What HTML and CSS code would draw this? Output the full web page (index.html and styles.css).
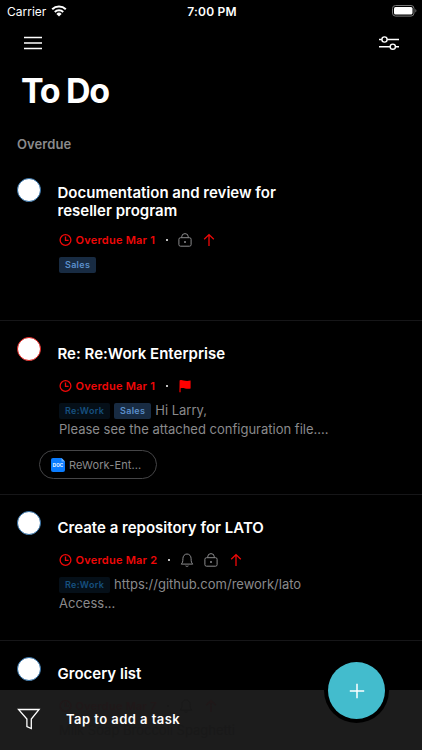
FILE: index.html
```html
<!DOCTYPE html>
<html lang="en">
<head>
<meta charset="utf-8">
<meta name="viewport" content="width=device-width, initial-scale=1">
<title>To Do</title>
<link rel="stylesheet" href="styles.css">
</head>
<body>
<!-- shared icons -->
<svg class="sprite">
	<symbol id="clock" viewBox="0 0 14 14"><circle cx="6.5" cy="7" r="5.4"/><path d="M6.5 3.6V7.3H9.6"/></symbol>
	<symbol id="lock" viewBox="0 0 14 14"><rect x=".9" y="4.700" width="12.200" height="8.500" rx="1.600"/><path d="M3.700 4.500V3.900a3.300 3.300 0 0 1 6.600 0v.6"/><circle class="dot" cx="7" cy="8.900" r="1"/></symbol>
	<symbol id="arrow" viewBox="0 0 12 14"><path d="M6 13V1.8M1.2 6.3 6 1.6l4.8 4.7"/></symbol>
	<symbol id="bell" viewBox="0 0 14 14"><path d="M1.2 11.100c1.300-1.200 1.700-2.300 1.700-5.400C2.900 3 4.600 1 7 1s4.100 2 4.100 4.700c0 3.100.4 4.200 1.700 5.400zM5.600 12.900c.8.600 2 .600 2.800 0"/></symbol>
	<symbol id="flag" viewBox="0 0 14 14"><path d="M1.600 1.400C4.300-.1 6 2.900 12.600 1.500V9.400C8.500 10.600 6 8.300 2.600 9.200V13.200H1.400z"/></symbol>
</svg>
<div class="statusbar">
	<div class="carrier">Carrier
		<svg width="16" height="12" viewBox="0 0 16 12"><path class="wave" d="M1.200 4.300a9.700 9.700 0 0 1 13.600 0M3.800 7a6 6 0 0 1 8.400 0"/><path class="tip" d="M8 11.500 5.400 8.900a3.700 3.700 0 0 1 5.200 0z"/></svg>
	</div>
	<div class="time">7:00 PM</div>
	<svg class="battery" width="25" height="12" viewBox="0 0 25 12"><rect class="shell" x=".5" y=".5" width="21.500" height="10.600" rx="3"/><rect class="level" x="2" y="2" width="18.500" height="7.600" rx="1.500"/><path class="nub" d="M23.400 4v3.600c1.300-.6 1.300-3 0-3.600"/></svg>
</div>
<div class="navbar">
	<svg width="20" height="14" viewBox="0 0 20 14"><path d="M1 1.500h18M1 7h18M1 12.500h18"/></svg>
	<svg width="22" height="16" viewBox="0 0 22 16"><path d="M1 4.500h2.800M9.200 4.500H21M1 11.700h11M17.600 11.700H21"/><circle cx="6.500" cy="4.500" r="2.600"/><circle cx="14.800" cy="11.700" r="2.600"/></svg>
</div>
<h1>To Do</h1>
<h2>Overdue</h2>
<div class="tasks">
	<div class="task first">
		<div class="check"></div>
		<div class="body">
			<div class="title">Documentation and review for reseller program</div>
			<div class="meta">
				<svg class="icon clock"><use href="#clock"/></svg><span class="due">Overdue Mar 1</span><span class="sep"></span>
				<svg class="icon"><use href="#lock"/></svg>
				<svg class="icon arrow"><use href="#arrow"/></svg>
			</div>
			<div class="desc"><span class="tag sales">Sales</span></div>
		</div>
	</div>
	<div class="task second">
		<div class="check urgent"></div>
		<div class="body">
			<div class="title">Re: Re:Work Enterprise</div>
			<div class="meta">
				<svg class="icon clock"><use href="#clock"/></svg><span class="due">Overdue Mar 1</span><span class="sep"></span>
				<svg class="icon flag"><use href="#flag"/></svg>
			</div>
			<div class="desc"><span class="tag rework">Re:Work</span><span class="tag sales">Sales</span>Hi Larry,<br>Please see the attached configuration file....</div>
			<div class="file">
				<svg width="14" height="14" viewBox="0 0 14 14"><path d="M2 0h8.500L14 3.500V12a2 2 0 0 1-2 2H2a2 2 0 0 1-2-2V2a2 2 0 0 1 2-2z"/><path class="fold" d="M10.500 0 14 3.500h-3.500z"/><text x="7" y="9.200">DOC</text></svg>
				<span>ReWork-Ent...</span>
			</div>
		</div>
	</div>
	<div class="task third">
		<div class="check"></div>
		<div class="body">
			<div class="title">Create a repository for LATO</div>
			<div class="meta">
				<svg class="icon clock"><use href="#clock"/></svg><span class="due">Overdue Mar 2</span><span class="sep"></span>
				<svg class="icon"><use href="#bell"/></svg>
				<svg class="icon"><use href="#lock"/></svg>
				<svg class="icon arrow"><use href="#arrow"/></svg>
			</div>
			<div class="desc"><span class="tag rework">Re:Work</span>https://github.com/rework/lato<br>Access...</div>
		</div>
	</div>
	<div class="task last">
		<div class="check"></div>
		<div class="body">
			<div class="title">Grocery list</div>
			<div class="meta">
				<svg class="icon clock"><use href="#clock"/></svg><span class="due">Overdue Mar 7</span><span class="sep"></span>
				<svg class="icon"><use href="#bell"/></svg>
				<svg class="icon arrow"><use href="#arrow"/></svg>
			</div>
			<div class="desc">Milk Soap Broccoli Spaghetti</div>
		</div>
	</div>
</div>
<div class="addbar">
	<svg width="24" height="22" viewBox="0 0 24 22"><path d="M1.500 1.500h20.600L14.300 11v9.500l-4.400-2V11z"/></svg>
	<span>Tap to add a task</span>
</div>
<div class="fab">
	<svg width="16" height="16" viewBox="0 0 16 16"><path d="M8 .8v14.400M.8 8h14.400"/></svg>
</div>
</body>
</html>
```
FILE: styles.css
```css
html,body{
	margin:0;
	padding:0;
	height:750px;
	overflow:hidden;
	background:#000;
	color:#fff;
	font-family:Inter,"Liberation Sans",sans-serif;
}
body{
	position:relative;
}
svg{
	display:block;
	fill:none;
	stroke:currentColor;
	flex:none;
}
.sprite{
	position:absolute;
	width:0;
	height:0;
}
.statusbar{
	display:grid;
	grid-template-columns:1fr auto 1fr;
	align-items:center;
	height:22px;
	padding:0 5px 0 7px;
	font-size:12px;
}
.carrier{
	display:flex;
	align-items:center;
	gap:5px;
	letter-spacing:0;
}
.wave{
	stroke-width:2;
}
.tip,.level{
	fill:#fff;
	stroke:none;
}
.time{
	font-weight:600;
	letter-spacing:0.2px;
}
.battery{
	justify-self:end;
}
.shell{
	stroke:#777;
}
.nub{
	fill:#777;
	stroke:none;
}
.navbar{
	display:flex;
	justify-content:space-between;
	align-items:center;
	height:42px;
	padding:0 22px 0 23px;
}
.navbar svg{
	stroke-width:1.4;
}
h1{
	margin:7px 0 0 21px;
	font-size:34px;
	line-height:40px;
	font-weight:700;
	letter-spacing:-1.3px;
}
h2{
	margin:23px 0 0 17px;
	height:27px;
	font-size:13px;
	line-height:20px;
	font-weight:600;
	letter-spacing:0.1px;
	color:#8a8a8c;
}
.task{
	display:flex;
	box-sizing:border-box;
	padding-left:17px;
	border-top:1px solid #161618;
}
.first{
	height:159px;
	border-color:#000;
}
.second{
	height:174px;
}
.third{
	height:146px;
}
.last{
	height:140px;
}
.check{
	box-sizing:border-box;
	width:24px;
	height:24px;
	margin:16px 16px 0 0;
	border:1px solid #2f6ea5;
	border-radius:50%;
	background:#fff;
	flex:none;
}
.urgent{
	border-color:#e0201c;
}
.body{
	padding-top:24px;
}
.first .body{
	padding-top:22px;
}
.title{
	width:250px;
	padding-left:0.5px;
	font-size:15px;
	line-height:18px;
	font-weight:600;
	letter-spacing:0.01px;
}
.meta{
	display:flex;
	align-items:center;
	gap:10.5px;
	height:16px;
	margin:15px 0 0 2px;
	color:#8a8a8c;
}
.first .meta{
	margin-top:12px;
}
.icon{
	width:14px;
	height:14px;
}
.dot{
	fill:currentColor;
	stroke:none;
}
.clock{
	color:#f00808;
	stroke-width:1.3;
	margin-right:-8px;
}
.due{
	font-size:11px;
	font-weight:600;
	letter-spacing:0.24px;
	color:#f00808;
}
.sep{
	width:2px;
	height:2px;
	margin-right:-0.5px;
	border-radius:50%;
	background:#fff;
}
.arrow{
	width:12px;
	margin-left:1px;
	stroke-width:1.3;
	color:#f00808;
}
.flag{
	color:#f00;
	fill:#f00;
	stroke:none;
}
.desc{
	margin:7px 0 0 2px;
	font-size:13px;
	line-height:18.5px;
	letter-spacing:0;
	color:#8a8a8c;
	white-space:nowrap;
}
.tag{
	display:inline-block;
	height:16px;
	margin-right:4px;
	padding:0 6px;
	border-radius:2px;
	font-size:9px;
	line-height:16px;
	font-weight:600;
	letter-spacing:0.3px;
	vertical-align:1px;
}
.sales{
	background:#182b42;
	color:#5b8fcb;
}
.rework{
	background:#050f18;
	color:#16507f;
}
.file{
	display:flex;
	align-items:center;
	gap:4px;
	box-sizing:border-box;
	width:118px;
	height:29px;
	margin:12px 0 0 -18px;
	padding-left:11px;
	border:1px solid #454547;
	border-radius:15px;
	font-size:11px;
	letter-spacing:0.12px;
	color:#8a8a8c;
}
.file svg{
	fill:#0a7cff;
	stroke:none;
}
.file .fold{
	fill:#6db3ff;
}
.file text{
	fill:#fff;
	font-size:4.5px;
	font-weight:700;
	text-anchor:middle;
}
/* details of the last task show faintly through the bar */
.last .meta,.last .desc{
	position:relative;
	z-index:1;
	color:#191919;
}
.last .clock,.last .due,.last .arrow{
	color:#201819;
}
.last .sep{
	background:#191919;
}
.addbar{
	position:absolute;
	left:0;
	right:0;
	bottom:0;
	display:flex;
	align-items:center;
	gap:25px;
	box-sizing:border-box;
	height:60px;
	padding:0 0 2px 17px;
	background:#1c1c1c;
	font-size:13px;
	font-weight:600;
	letter-spacing:0.45px;
}
.addbar svg{
	stroke-width:1.3;
}
.addbar span{
	position:relative;
	z-index:2;
}
.fab{
	position:absolute;
	z-index:2;
	left:328px;
	top:662px;
	display:flex;
	align-items:center;
	justify-content:center;
	width:57px;
	height:57px;
	border-radius:50%;
	background:#43bccd;
	box-shadow:0 0 0 4px #000;
}
.fab svg{
	stroke-width:1.5;
}
```
